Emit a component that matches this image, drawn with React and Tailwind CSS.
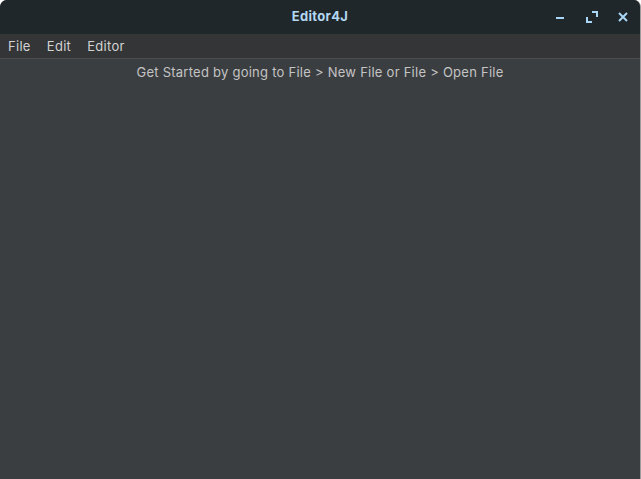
import React from 'react';

const font = { fontFamily: 'Inter, "Noto Sans", sans-serif' };

const App = () => {
    return (
        <div className="w-[641px] h-[479px] bg-white overflow-hidden" style={font}>
            <div className="flex flex-col h-full rounded-t-[7px] overflow-hidden bg-[#3b3e41] border-r border-[#9c9c9c]">
                {/* title bar */}
                <div className="relative flex items-center justify-center h-[34px] bg-[#1f272b] shrink-0">
                    <span className="text-[13px] font-bold tracking-[0.3px] text-[#b3d8f2]">Editor4J</span>
                    <div className="absolute right-0 top-0 h-full flex items-center">
                        <button className="w-[32px] h-full flex items-center justify-center">
                            <svg width="10" height="10" viewBox="0 0 10 10">
                                <rect x="1" y="5" width="8" height="2" fill="#a9d6f5" />
                            </svg>
                        </button>
                        <button className="w-[32px] h-full flex items-center justify-center">
                            <svg width="12" height="12" viewBox="0 0 12 12" fill="#a9d6f5">
                                <rect x="6" y="0" width="6" height="2" />
                                <rect x="10" y="0" width="2" height="6" />
                                <rect x="0" y="10" width="6" height="2" />
                                <rect x="0" y="6" width="2" height="6" />
                            </svg>
                        </button>
                        <button className="w-[32px] h-full flex items-center justify-center pr-[2px]">
                            <svg width="10" height="10" viewBox="0 0 10 10">
                                <path d="M1 1 L9 9 M9 1 L1 9" stroke="#a9d6f5" strokeWidth="2" />
                            </svg>
                        </button>
                    </div>
                </div>
                {/* menu bar */}
                <div className="flex items-center h-[25px] pt-[1px] bg-[#333537] border-b border-[#4b4d4f] shrink-0 text-[13px] tracking-[0.3px] text-[#d2d2d2]">
                    <span className="pl-[8px] pr-[8px]">File</span>
                    <span className="px-[8px]">Edit</span>
                    <span className="px-[8px]">Editor</span>
                </div>
                {/* content */}
                <div className="flex-1 flex justify-center pt-[4px]">
                    <span className="text-[13px] tracking-[0.25px] text-[#c4c4c4]">Get Started by going to File &gt; New File or File &gt; Open File</span>
                </div>
            </div>
        </div>
    );
};

export default App;
